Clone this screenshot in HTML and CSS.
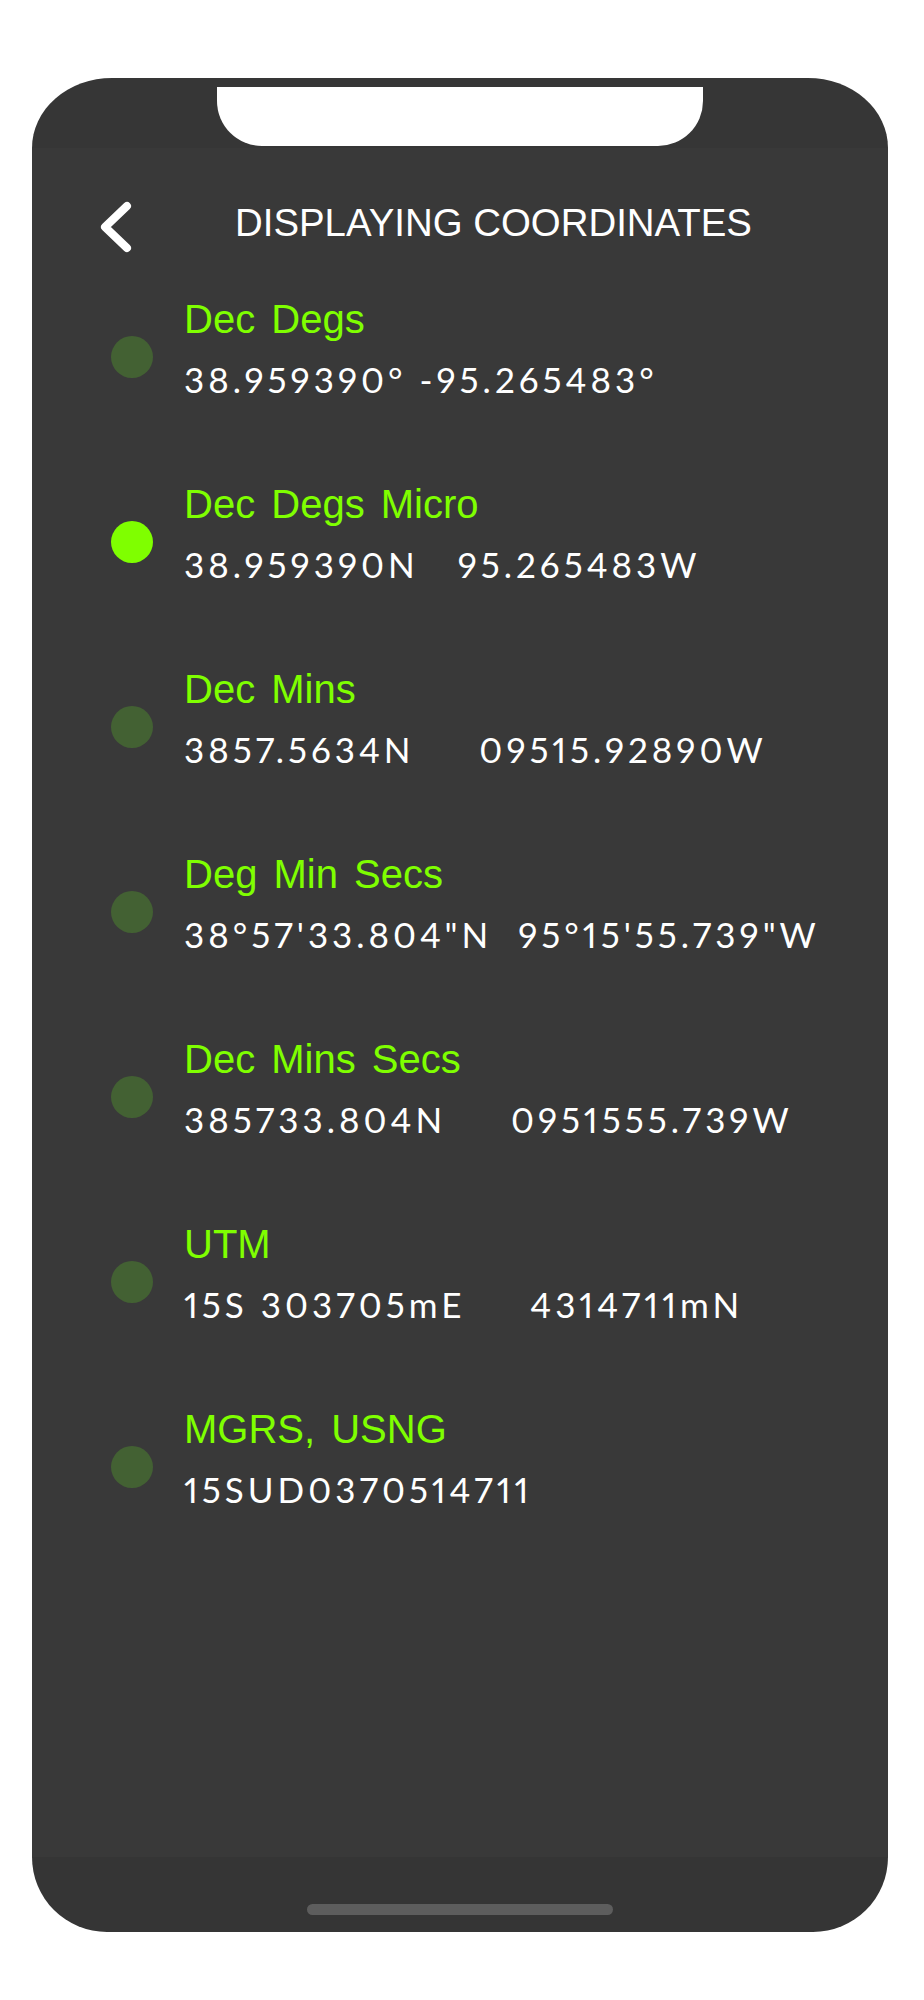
FILE: index.html
```html
<!DOCTYPE html>
<html lang="en">
<head>
  <meta charset="UTF-8">
  <meta name="viewport" content="width=device-width, initial-scale=1.0">
  <title>Displaying Coordinates</title>
  <link rel="stylesheet" href="styles.css">
</head>
<body>

  <div class="phone">
    <div class="top-bezel">
      <div class="notch"></div>
    </div>

    <div class="screen">
      <!-- Header -->
      <div class="header">
        <svg class="back" width="32" height="52" viewBox="0 0 32 52">
          <path d="M27 5 L5 26 L27 47" fill="none" stroke="#fff" stroke-width="8" stroke-linecap="round" stroke-linejoin="round"/>
        </svg>
        <h1 class="title">DISPLAYING COORDINATES</h1>
      </div>

      <!-- Format list -->
      <div class="format-list">
        <div class="format">
          <span class="dot"></span>
          <div class="format-text">
            <div class="format-name">Dec Degs</div>
            <div class="format-value">38.959390° -95.265483°</div>
          </div>
        </div>
        <div class="format selected">
          <span class="dot"></span>
          <div class="format-text">
            <div class="format-name">Dec Degs Micro</div>
            <div class="format-value">38.959390N   95.265483W</div>
          </div>
        </div>
        <div class="format">
          <span class="dot"></span>
          <div class="format-text">
            <div class="format-name">Dec Mins</div>
            <div class="format-value">3857.5634N     09515.92890W</div>
          </div>
        </div>
        <div class="format">
          <span class="dot"></span>
          <div class="format-text">
            <div class="format-name">Deg Min Secs</div>
            <div class="format-value">38°57'33.804"N  95°15'55.739"W</div>
          </div>
        </div>
        <div class="format">
          <span class="dot"></span>
          <div class="format-text">
            <div class="format-name">Dec Mins Secs</div>
            <div class="format-value">385733.804N     0951555.739W</div>
          </div>
        </div>
        <div class="format">
          <span class="dot"></span>
          <div class="format-text">
            <div class="format-name">UTM</div>
            <div class="format-value">15S 303705mE     4314711mN</div>
          </div>
        </div>
        <div class="format">
          <span class="dot"></span>
          <div class="format-text">
            <div class="format-name">MGRS, USNG</div>
            <div class="format-value">15SUD0370514711</div>
          </div>
        </div>
      </div>
    </div>

    <div class="bottom-bezel">
      <div class="home-bar"></div>
    </div>
  </div>

</body>
</html>
```

FILE: styles.css
```css
body {
  margin: 0;
  background: #fff;
  font-family: 'Liberation Sans', Arial, sans-serif;
}

.phone {
  width: 856px;
  margin: 78px 0 0 32px;
}

.top-bezel {
  height: 70px;
  background: #363636;
  border-radius: 80px 80px 0 0 / 70px 70px 0 0;
  display: flex;
  justify-content: center;
  padding-top: 9px;
  box-sizing: border-box;
}

.notch {
  width: 486px;
  height: 59px;
  background: #fff;
  border-radius: 0 0 45px 45px;
}

.screen {
  height: 1709px;
  background: #393939;
  padding: 53px 0 0 68px;
  box-sizing: border-box;
}

.header {
  display: flex;
  align-items: flex-start;
  gap: 103px;
}

.back {
  display: block;
}

.title {
  margin: 0;
  font-size: 38.4px;
  line-height: 43px;
  font-weight: normal;
  color: #fff;
}

.format-list {
  margin-top: 43px;
  display: flex;
  flex-direction: column;
  gap: 81px;
}

.format {
  display: flex;
  align-items: flex-start;
  gap: 31px;
  padding-left: 11px;
}

.dot {
  width: 42px;
  height: 42px;
  margin-top: 40px;
  border-radius: 50%;
  background: #436133;
  flex-shrink: 0;
}

.format.selected .dot {
  background: #7fff00;
}

.format-name {
  font-size: 40px;
  line-height: 46px;
  word-spacing: 5px;
  color: #7fff00;
}

.format-value {
  margin-top: 16px;
  font-family: Lato, 'Liberation Sans', sans-serif;
  font-size: 35px;
  line-height: 42px;
  letter-spacing: 4px;
  font-variant-numeric: proportional-nums;
  color: #fff;
  white-space: pre;
}

.bottom-bezel {
  height: 75px;
  background: #353535;
  border-radius: 0 0 75px 75px;
  display: flex;
  justify-content: center;
  padding-top: 47px;
  box-sizing: border-box;
}

.home-bar {
  width: 306px;
  height: 11px;
  border-radius: 6px;
  background: #5d5d5d;
}
```
